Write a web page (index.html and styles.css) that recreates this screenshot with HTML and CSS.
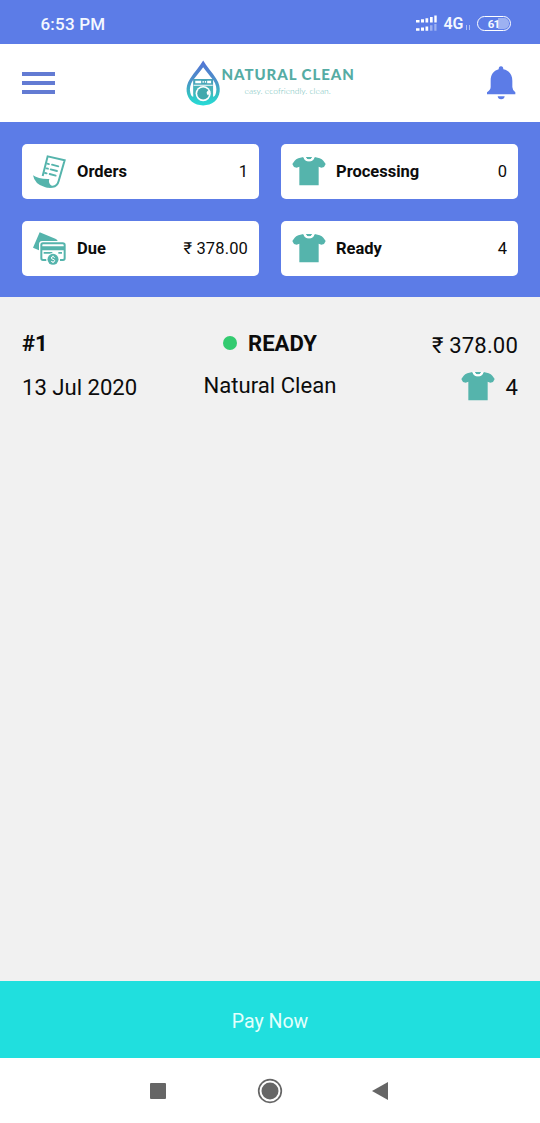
FILE: index.html
```html
<!DOCTYPE HTML>
<html lang="en">

<head>
  <title>Natural Clean</title>
  <meta charset="utf-8">
  <meta name="theme-color" content="#5C7CE7">
  <meta name="viewport" content="width=540">
  <link rel="stylesheet" href="styles.css">
</head>
<body>
  <svg class="defs">
    <symbol id="shirt" viewBox="455 64 102 88">
      <path fill="#55b4ac" d="M489 66 L474 70 Q467 72 463 77 L456 87 L461 96 L469 98 L477 95 V151 H535 V95 L543 98 L551 96 L556 87 L549 77 Q545 72 538 70 L523 66 Q519 79 506 79 Q493 79 489 66Z"/>
      <path fill="#55b4ac" d="M495 66 H517 Q513 74 506 74 Q499 74 495 66Z"/>
      <path class="collar" d="M489 65 Q493 79 506 79 Q519 79 523 65 H516 Q513 73 506 73 Q499 73 496 65Z"/>
    </symbol>
  </svg>

  <div class="status-bar">
    <span class="clock">6:53 PM</span>
    <div class="status-icons">
      <svg class="signal" width="21" height="18" viewBox="0 0 21 18" fill="#fff">
        <path d="M0 5h3.500v2.500H0zM5 4.200h3v3.300H5zM9.500 3.200h2.700v4.300H9.500zM14 2h2.700v5.500H14zM18.300 .5h2.400v7h-2.400zM0 13.200h3.500v2.500H0zM5 12.600h3v3.100H5zM9.500 11.500h2.700v4.200H9.500z"/>
        <path opacity=".4" d="M14 10.300h2.500v5.400H14zM18.300 9h2.200v6.700h-2.200z"/>
      </svg>
      <span class="network">4G</span>
      <svg class="data" width="6" height="7" viewBox="0 0 6 7" fill="none" stroke="#fff" opacity=".5"><path d="M1.500 1v5M4.500 1v5"/></svg>
      <div class="battery"><span>61</span></div>
    </div>
  </div>

  <div class="header">
    <div class="menu"><i></i><i></i><i></i></div>
    <div class="logo">
      <svg width="35" height="46" viewBox="18 30 106 138">
        <defs>
          <linearGradient id="drop" gradientUnits="userSpaceOnUse" x1="0" y1="31" x2="0" y2="167">
            <stop offset="0" stop-color="#5373d6"/>
            <stop offset=".45" stop-color="#4c91c8"/>
            <stop offset=".75" stop-color="#35bfc1"/>
            <stop offset="1" stop-color="#26dcd9"/>
          </linearGradient>
        </defs>
        <path fill="url(#drop)" d="M70 31 C80 48 96 65 110 87 C119 101 121 112 120 125 C117 151 97 167 70 167 C43 167 23 151 20 125 C19 112 21 101 30 87 C44 65 60 48 70 31Z"/>
        <path fill="#fff" d="M70 51 C78 62 91 77 101 91 C109 103 112 117 109 128 C107 137 104 141 100 141 V90 Q100 87 97 87 H43 Q40 87 40 90 V141 C36 141 33 137 31 128 C28 117 31 103 39 91 C49 77 62 62 70 51Z"/>
        <path fill="#46a6b7" d="M41 87h58v20H41z"/>
        <path fill="#48b4b8" d="M41 107h58v26H41z"/>
        <path fill="#fff" d="M46 92h18v8H46zM82 92h12v8H82zM68 93h4v5h-4zM75 93h4v5h-4zM41 104h58v3.500H41z"/>
        <circle cx="70" cy="131" r="23" fill="#fff"/>
        <circle cx="70" cy="131" r="18" fill="#42a9ad"/>
        <path fill="#fff" d="M87 121 Q75 127 85 137 L88 132Z"/>
      </svg>
      <div class="brand">
        <span class="brand-name">NATURAL CLEAN</span>
        <span class="tagline">easy. ecofriendly. clean.</span>
      </div>
    </div>
    <svg class="bell" width="30" height="34" viewBox="259 198 90 102" fill="#5c7ce7">
      <path d="M304 199 Q311 199 311 208 C329 212 338 225 338 242 V261 Q338 270 347 277 V283 H262 V277 Q273 270 273 261 V242 C273 225 281 212 297 208 Q297 199 304 199Z"/>
      <path d="M294 289H315Q314 298 304.500 298Q295 298 294 289Z"/>
    </svg>
  </div>

  <div class="summary">
    <div class="card">
      <svg width="33" height="33" viewBox="54 58 99 99" fill="none" stroke="#55b4ac" stroke-width="6">
        <path d="M83 121 L98 62 L149 74 L131 136 Q127 152 113 153 L101 153"/>
        <path fill="#55b4ac" stroke="none" d="M54 119 Q70 131 103 130 Q98 145 114 153 Q105 159 91 155 Q59 147 54 119Z"/>
        <path d="M97 84l5 1.200M111 87l19 5M94 98l5 1.200M107 101l19 5M90 112l5 1.200M104 115l18 5" stroke-linecap="round" stroke-width="5.500"/>
      </svg>
      <span class="card-title">Orders</span>
      <span class="card-value">1</span>
    </div>
    <div class="card">
      <svg class="shirt"><use href="#shirt"/></svg>
      <span class="card-title">Processing</span>
      <span class="card-value">0</span>
    </div>
    <div class="card">
      <svg width="33" height="33" viewBox="55 289 99 99">
        <path fill="#55b4ac" d="M75 290 L122 309 Q128 312 129 316 H82 Q73 317 73 326 V344 L55 336Z"/>
        <path fill="none" stroke="#55b4ac" stroke-width="6" d="M95 373H85Q80 373 80 368V328Q80 323 85 323H144Q150 323 150 328V368Q150 373 145 373H136"/>
        <path fill="#55b4ac" d="M80 332h70v12H80zM87 349h26v5H87zM131 349h11v5H131z"/>
        <circle cx="115" cy="371" r="19" fill="#fff"/>
        <circle cx="115" cy="371" r="16.500" fill="#55b4ac"/>
        <path fill="none" stroke="#fff" stroke-width="3" d="M120 366Q118 363 115 363Q110 363 110 367Q110 370 115 371Q120 372 120 375Q120 379 115 379Q111 379 109 376M115 360v3M115 379v3"/>
      </svg>
      <span class="card-title">Due</span>
      <span class="card-value rupees">₹ 378.00</span>
    </div>
    <div class="card">
      <svg class="shirt"><use href="#shirt"/></svg>
      <span class="card-title">Ready</span>
      <span class="card-value">4</span>
    </div>
  </div>

  <div class="orders">
    <div class="order">
      <div class="order-left">
        <b>#1</b>
        <span>13 Jul 2020</span>
      </div>
      <div class="order-center">
        <b class="state">READY</b>
        <span>Natural Clean</span>
      </div>
      <div class="order-right">
        <span class="rupees">₹ 378.00</span>
        <span class="items"><svg class="shirt"><use href="#shirt"/></svg>4</span>
      </div>
    </div>
  </div>

  <button class="pay">Pay Now</button>

  <div class="nav-bar">
    <svg width="26" height="26" viewBox="0 0 26 26"><rect x="5" y="5" width="16" height="16" rx="1" fill="#666"/></svg>
    <svg width="26" height="26" viewBox="0 0 26 26"><circle cx="13" cy="13" r="11.300" fill="none" stroke="#666" stroke-width="1.700"/><circle cx="13" cy="13" r="8.500" fill="#666"/></svg>
    <svg width="26" height="26" viewBox="0 0 26 26"><path fill="#666" d="M3 13 L19 4V22Z"/></svg>
  </div>
</body>

</html>
```
FILE: styles.css
```css
* {
  box-sizing: border-box;
}
body {
  margin: 0;
  height: 1123px;
  display: flex;
  flex-direction: column;
  font-family: Roboto, "Noto Sans", sans-serif;
  background-color: #f1f1f1;
  color: #0c0c0c;
}
svg {
  display: block;
  flex: none;
}
.defs {
  width: 0;
  height: 0;
  display: none;
}
.shirt {
  width: 34px;
  height: 30px;
}
.collar {
  fill: #fff;
}
/* status bar */
.status-bar {
  height: 44px;
  padding: 3px 29.5px 0 40.5px;
  display: flex;
  align-items: center;
  justify-content: space-between;
  background-color: #5c7ce7;
  color: #f4f8ff;
}
.clock {
  font-size: 17px;
  font-weight: 500;
  letter-spacing: .2px;
}
.status-icons {
  display: flex;
  align-items: center;
}
.network {
  margin-left: 6px;
  font-size: 16px;
  font-weight: 600;
}
.data {
  margin: 7px 6px 0 1px;
}
.battery {
  width: 34px;
  height: 15px;
  border: 1.5px solid #fff;
  border-radius: 8px;
  padding: 1px;
  font-size: 11.5px;
  font-weight: 700;
  line-height: 12px;
  text-align: center;
}
.battery span {
  display: block;
  height: 11px;
  border-radius: 5px;
  letter-spacing: -.8px;
  background: linear-gradient(90deg, #5c7ce7 62%, #9db1f1 62%);
}
/* header */
.header {
  height: 78px;
  padding: 0 24px 0 22px;
  display: flex;
  align-items: center;
  justify-content: space-between;
  background-color: #fff;
}
.menu {
  width: 33px;
  display: flex;
  flex-direction: column;
  gap: 5px;
}
.menu i {
  height: 4px;
  background-color: #637bd3;
}
.logo {
  display: flex;
}
.brand {
  width: 135px;
  padding: 5px 0 0 1px;
  display: flex;
  flex-direction: column;
  white-space: nowrap;
}
.brand-name {
  font-family: Lato, sans-serif;
  font-size: 15px;
  line-height: 18px;
  font-weight: 900;
  letter-spacing: .95px;
  color: #55aca4;
}
.tagline {
  padding: 2px 0 0 23px;
  font-family: Lato, sans-serif;
  font-size: 8.5px;
  line-height: 12px;
  font-weight: 300;
  color: #6bbcb6;
}
/* counters */
.summary {
  height: 175px;
  padding: 21.5px 22px;
  display: grid;
  grid-template-columns: 1fr 1fr;
  grid-auto-rows: 55px;
  gap: 22px;
  background-color: #5c7ce7;
}
.card {
  padding: 1px 11px 0;
  display: flex;
  align-items: center;
  border-radius: 5px;
  background-color: #fff;
  font-size: 16.5px;
}
.card-title {
  margin-left: 11px;
  font-weight: 700;
}
.card .shirt {
  margin: 0 .5px 1px -.5px;
}
.card .shirt + .card-title {
  margin-left: 10px;
}
.card-value {
  margin-left: auto;
}
.rupees {
  letter-spacing: .15px;
}
/* order list */
.orders {
  flex: 1;
  padding: 33px 22px;
}
.order {
  display: grid;
  grid-template-columns: 1fr auto 1fr;
  font-size: 22.1px;
  line-height: 26px;
}
.order .collar {
  fill: #f1f1f1;
}
.order-left,
.order-center,
.order-right {
  display: flex;
  flex-direction: column;
}
.order-left {
  gap: 18px;
}
.order-center {
  align-items: center;
  gap: 16px;
}
.order-right {
  align-items: flex-end;
  padding-top: 2px;
  gap: 16px;
}
.order .shirt {
  margin: 0 1px 2px 0;
}
.state {
  display: flex;
  align-items: center;
}
.state::before {
  content: "";
  width: 14px;
  height: 14px;
  margin: -1px 11px 0 0;
  border-radius: 50%;
  background-color: #33cb70;
}
.items {
  height: 26px;
  display: flex;
  align-items: center;
  gap: 10px;
}
/* footer */
.pay {
  height: 77px;
  padding: 3px 0 0;
  border: 0;
  background-color: #20dfde;
  color: #e4fffc;
  font: 19.5px Roboto, sans-serif;
}
.nav-bar {
  height: 65px;
  display: flex;
  align-items: center;
  justify-content: center;
  gap: 86px;
  background-color: #fff;
}
```
